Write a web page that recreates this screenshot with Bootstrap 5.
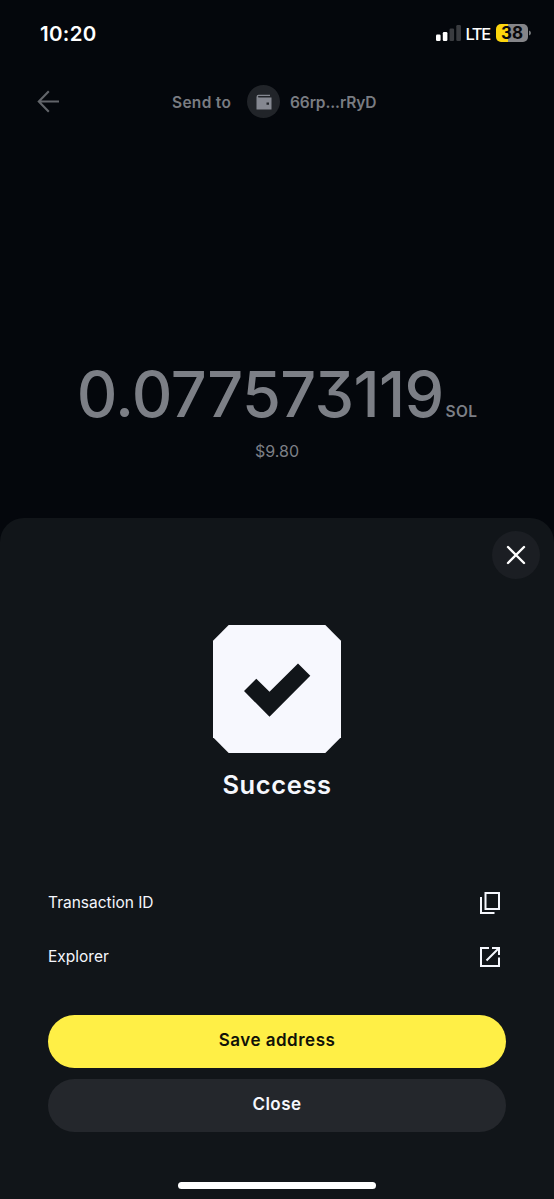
<!DOCTYPE html>
<html lang="en">
<head>
<meta charset="utf-8">
<meta name="viewport" content="width=device-width, initial-scale=1">
<title>Send to wallet</title>
<link href="https://cdn.jsdelivr.net/npm/bootstrap@5.3.0/dist/css/bootstrap.min.css" rel="stylesheet">
<style>
body{background:#04070c;font-family:Inter,"Liberation Sans",sans-serif;color:#f5f7fd;height:1199px;overflow:hidden;line-height:1}
svg{display:block;flex:none}
.screen{height:1199px}
.status{height:66px;padding:0 23px 0 40px}
.clock{font-size:20.5px;font-weight:600;color:#fff;letter-spacing:.3px;padding-top:2px}
.lte{font-size:16.5px;font-weight:500;color:#fff;letter-spacing:-1.3px;margin:2px 6px 0 4px}
.battery{width:32px;height:18px;border-radius:5px;background:linear-gradient(90deg,#fdd50d 38%,#858589 38%);color:#09090b;font-size:17px;font-weight:700}
.topbar{height:71px;padding-left:37px;color:#797c82;font-size:15.5px;font-weight:600}
.send-label{margin-left:112px;width:75px;letter-spacing:.3px;padding-top:2px}
.wallet{width:33px;height:33px;background:#212429;margin-right:10px}
.addr{letter-spacing:-.1px;padding-top:2px}
.amount-area{height:381px;padding-top:224px;color:#7c7f86}
.amount{height:66px}
.amount-value{font-size:63px;font-weight:500;letter-spacing:-.65px;font-feature-settings:"cv09";line-height:66px}
.unit{font-size:15.5px;font-weight:600;line-height:20px;margin-bottom:5px;margin-left:2px;letter-spacing:.3px}
.fiat{font-size:16px;font-weight:400;margin-top:16px}
.sheet{background:#111519;border-radius:24px 24px 0 0;height:681px;padding:0 48px}
.sheet-head{height:106px;margin-right:-34px;padding-top:13px}
.close-x{width:48px;height:48px;background:#1b1e23;border:0;padding:0}
.result-title{font-size:25.5px;font-weight:600;line-height:30px;margin:16px 0 76px;letter-spacing:.6px}
.info-row{height:54px;font-size:15.5px;font-weight:400;padding-right:5px}
.info-row svg{margin-top:-1px}
.actions{margin-top:31px;gap:11px}
.action{height:53px;font-size:17px;font-weight:600;border:0;padding:0 0 2px;line-height:1;letter-spacing:.5px}
.save,.save:hover{background:#ffef46;color:#111208}
.dismiss,.dismiss:hover{background:#24272c;color:#f5f7fd}
.home-bar{width:198px;height:7px;background:#fff;margin:50px auto 0}
</style>
</head>
<body>
<main class="screen d-flex flex-column">
  <header class="status d-flex align-items-center">
    <span class="clock">10:20</span>
    <div class="ms-auto d-flex align-items-center">
      <svg width="25" height="16" viewBox="0 0 25 16"><g fill="#fff"><rect y="9.5" width="4.6" height="6.5" rx="1.2"/><rect x="6.8" y="7" width="4.6" height="9" rx="1.2"/></g><g fill="#3a3c40"><rect x="13.5" y="3.5" width="4.6" height="12.5" rx="1.2"/><rect x="20.3" y="0" width="4.6" height="16" rx="1.2"/></g></svg>
      <span class="lte">LTE</span>
      <div class="battery d-flex align-items-center justify-content-center">38</div>
      <svg width="3" height="6" viewBox="0 0 3 6"><path d="M1 .5Q3 1.2 3 3T1 5.5Z" fill="#77797d"/></svg>
    </div>
  </header>
  <nav class="topbar d-flex align-items-center">
    <svg width="23" height="23" viewBox="0 0 23 23" fill="none" stroke="#62656a" stroke-width="2.1"><path d="M22 11.5H2M11.8 1.3 1.8 11.5l10 10.2"/></svg>
    <span class="send-label">Send to</span>
    <span class="wallet rounded-circle d-flex align-items-center justify-content-center"><svg width="16" height="16" viewBox="0 0 16 16"><path fill="#858891" fill-rule="evenodd" d="M2.5.7H14V2H3Q1.8 2 1.8 2.8T3 3.6H15.5V15.5H.5V3Q.5.7 2.5.7ZM10.5 8.5v2.2H13V8.5Z"/></svg></span>
    <span class="addr">66rp...rRyD</span>
  </nav>
  <section class="amount-area">
    <div class="amount d-flex justify-content-center align-items-end"><span class="amount-value">0.077573119</span><span class="unit">SOL</span></div>
    <div class="fiat text-center">$9.80</div>
  </section>
  <section class="sheet">
    <div class="sheet-head d-flex justify-content-end align-items-start">
      <button class="close-x rounded-circle d-flex align-items-center justify-content-center" aria-label="Close"><svg width="20" height="20" viewBox="0 0 20 20" stroke="#fff" stroke-width="2.4" stroke-linecap="round"><path d="m2 2 16 16M18 2 2 18"/></svg></button>
    </div>
    <svg class="mx-auto" width="130" height="130" viewBox="0 0 130 130"><path fill="#f7f8fe" d="M16.7 1H113.3L129 16.7V113.3L113.3 129H16.7L1 113.3V16.7Z"/><path fill="#111519" d="M32 67 44.3 54.7 57.5 67.7 86 39.5 98.3 51.8 57.5 92.8Z"/></svg>
    <h1 class="result-title text-center">Success</h1>
    <div class="info-row d-flex align-items-center justify-content-between"><span>Transaction ID</span>
      <svg width="22" height="24" viewBox="0 0 22 24" fill="none" stroke="#f5f7fd" stroke-width="2"><path d="M6.5 2H20V18H6.5ZM2 6V22H15.5"/></svg></div>
    <div class="info-row d-flex align-items-center justify-content-between"><span>Explorer</span>
      <svg width="22" height="22" viewBox="0 0 22 22" fill="none" stroke="#f5f7fd" stroke-width="2"><path d="M10 2H2V20H20V11.5M13 2H20V9M20 2 7.5 14.5"/></svg></div>
    <div class="actions d-flex flex-column">
      <button class="btn action save rounded-pill">Save address</button>
      <button class="btn action dismiss rounded-pill">Close</button>
    </div>
    <div class="home-bar rounded-pill"></div>
  </section>
</main>
<script src="https://cdn.jsdelivr.net/npm/bootstrap@5.3.0/dist/js/bootstrap.bundle.min.js"></script>
</body>
</html>
